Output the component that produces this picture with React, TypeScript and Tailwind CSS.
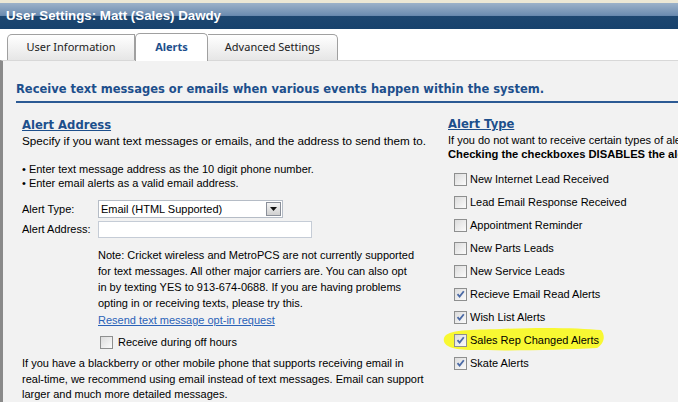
import React from "react";

const alertTypes = [
  { label: "New Internet Lead Received", checked: false },
  { label: "Lead Email Response Received", checked: false },
  { label: "Appointment Reminder", checked: false },
  { label: "New Parts Leads", checked: false },
  { label: "New Service Leads", checked: false },
  { label: "Recieve Email Read Alerts", checked: true },
  { label: "Wish List Alerts", checked: true },
  { label: "Sales Rep Changed Alerts", checked: true, highlight: true },
  { label: "Skate Alerts", checked: true },
];

function Box({ checked }: { checked: boolean }) {
  return (
    <span className="relative inline-block h-[13px] w-[13px] shrink-0 border border-[#8e8f8f] bg-gradient-to-br from-[#dcdcdc] to-[#fbfbfb]">
      {checked && (
        <svg viewBox="0 0 11 11" className="absolute left-0 top-0 h-[11px] w-[11px]">
          <path d="M2.5 5.2 L4.6 7.6 L8.8 2.2" fill="none" stroke="#4b6aa6" strokeWidth="1.8" />
        </svg>
      )}
    </span>
  );
}

export default function App() {
  return (
    <div className="h-[402px] w-[678px] overflow-hidden bg-white" style={{ fontFamily: "'Liberation Sans', Arial, sans-serif" }}>
      <div className="h-[3px] bg-[#ece8d5]" />
      <div className="flex h-[26px] items-center bg-[linear-gradient(to_bottom,#9cb2c9_0%,#6b8bb0_48%,#1d4670_50%,#17426d_100%)] pl-[6px]">
        <span className="text-[13.3px] font-bold text-white">User Settings: Matt (Sales) Dawdy</span>
      </div>

      <div className="flex h-[31px] items-end pl-[7px]" style={{ fontFamily: "'Noto Sans', sans-serif" }}>
        <div className="flex h-[26px] w-[128px] items-center justify-center rounded-tl-[5px] border border-b-0 border-[#a0a0a0] bg-gradient-to-b from-white to-[#e6e6e6] text-[11px] text-[#222]">
          User Information
        </div>
        <div className="-mb-px flex h-[28px] w-[73px] items-center justify-center rounded-t-[5px] border border-b-0 border-[#a0a0a0] bg-white text-[11px] font-bold text-[#1d4f8c]">
          Alerts
        </div>
        <div className="flex h-[26px] w-[130px] items-center justify-center rounded-tr-[5px] border border-b-0 border-l-0 border-[#a0a0a0] bg-gradient-to-b from-white to-[#e6e6e6] text-[11px] text-[#222]">
          Advanced Settings
        </div>
      </div>

      <div className="h-[342px] border-l-[3px] border-t border-[#8a8a8a] border-t-[#d8d8d8] bg-[#f2f2f2] pl-[13px] pt-[21px] text-[11px] leading-[14px] text-black">
        <div className="whitespace-nowrap border-b-2 border-[#2c5a94] pb-[5px] text-[11.5px] font-bold text-[#1d4f8c]" style={{ fontFamily: "'DejaVu Sans', Verdana, sans-serif" }}>
          Receive text messages or emails when various events happen within the system.
        </div>

        <div className="flex pt-[14px]">
          <div className="w-[429px] shrink-0 whitespace-nowrap pl-[6px]">
            <div className="pt-[1px] text-[11.6px] font-bold leading-[15px] text-[#1d4f8c] underline" style={{ fontFamily: "'DejaVu Sans', Verdana, sans-serif" }}>
              Alert Address
            </div>
            <div className="mt-[1px] text-[11.7px]">Specify if you want text messages or emails, and the address to send them to.</div>
            <div className="mt-[14px]">• Enter text message address as the 10 digit phone number.</div>
            <div>• Enter email alerts as a valid email address.</div>

            <div className="mt-[10px] flex items-center">
              <span className="w-[76px]">Alert Type:</span>
              <div className="flex h-[18px] w-[185px] items-center justify-between border border-[#b5bcc6] bg-white pl-[2px] pr-[1px]">
                <span>Email (HTML Supported)</span>
                <span className="flex h-[14px] w-[15px] items-center justify-center border border-[#8a8f99] bg-gradient-to-b from-[#f4f4f4] to-[#d0d0d0]">
                  <svg viewBox="0 0 7 4" className="h-[4px] w-[7px]"><path d="M0 0 H7 L3.5 4 Z" fill="#111" /></svg>
                </span>
              </div>
            </div>
            <div className="mt-[3px] flex items-start">
              <span className="w-[76px] pt-[1px]">Alert Address:</span>
              <div className="h-[17px] w-[214px] border border-[#c5ccd6] bg-white" />
            </div>

            <div className="mt-[9px] pl-[76px] leading-[16px]">
              Note: Cricket wireless and MetroPCS are not currently supported<br />
              for text messages. All other major carriers are. You can also opt<br />
              in by texting YES to 913-674-0688. If you are having problems<br />
              opting in or receiving texts, please try this.
            </div>
            <div className="mt-[1px] pl-[76px] leading-[16px] text-[#2a62b8] underline">Resend text message opt-in request</div>
            <div className="mt-[7px] flex items-center gap-[5px] pl-[78px]">
              <Box checked={false} />
              <span>Receive during off hours</span>
            </div>
            <div className="mt-[7px] leading-[15.5px]">
              If you have a blackberry or other mobile phone that supports receiving email in<br />
              real-time, we recommend using email instead of text messages. Email can support<br />
              larger and much more detailed messages.
            </div>
          </div>

          <div className="whitespace-nowrap pl-[3px]">
            <div className="text-[11.6px] font-bold leading-[15px] text-[#1d4f8c] underline" style={{ fontFamily: "'DejaVu Sans', Verdana, sans-serif" }}>
              Alert Type
            </div>
            <div className="mt-[1px]">If you do not want to receive certain types of alerts, uncheck them below.</div>
            <div className="text-[11.2px] font-bold">Checking the checkboxes DISABLES the alerts.</div>
            <div className="mt-[11px] flex flex-col gap-[9px] pl-[6px]">
              {alertTypes.map((a) => (
                <div key={a.label} className="relative flex items-center gap-[3px]">
                  {a.highlight && (
                    <svg viewBox="0 0 164 26" className="absolute left-[-13px] top-[-7px] h-[26px] w-[164px]">
                      <path d="M3 12 C6 3 30 4 60 3 C100 1 140 2 160 4 C165 10 163 18 156 22 C120 24 70 25 30 24 C12 24 1 20 3 12 Z" fill="#f8f832" />
                    </svg>
                  )}
                  <span className="relative flex items-center gap-[3px]">
                    <Box checked={a.checked} />
                    <span>{a.label}</span>
                  </span>
                </div>
              ))}
            </div>
          </div>
        </div>
      </div>
    </div>
  );
}
